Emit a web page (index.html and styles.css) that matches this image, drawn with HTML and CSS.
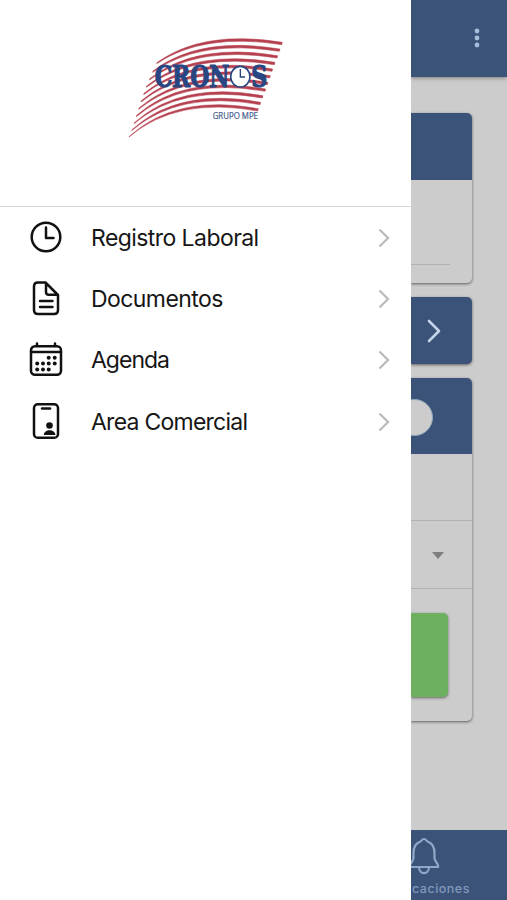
FILE: index.html
```html
<!DOCTYPE html>
<html lang="es">
<head>
<meta charset="utf-8">
<title>Cronos</title>
<link rel="stylesheet" href="styles.css">
</head>
<body>
<div class="app">
  <aside class="menu">
    <header class="brand">
      <svg class="logo" viewBox="0 0 510 345" role="img" aria-label="Cronos">
        <g fill="#b5404f" stroke="#b5404f" stroke-width="1.6">
          <path d="M112 97Q250-2 487 37L485 44Q250 7 110 101Z"/>
          <path d="M99 123Q238 17 480 57L478 64Q238 26 98 127Z"/>
          <path d="M89 146Q228 36 473 77L471 84Q228 45 88 150Z"/>
          <path d="M80 168Q219 56 465 97L463 104Q219 65 79 172Z"/>
          <path d="M72 190Q212 75 458 117L456 124Q212 84 71 194Z"/>
          <path d="M64 212Q205 94 451 137L449 144Q205 103 63 216Z"/>
          <path d="M57 234Q198 113 444 157L442 164Q198 122 56 238Z"/>
          <path d="M50 256Q191 132 437 177L435 184Q191 141 49 260Z"/>
          <path d="M43 278Q184 152 429 197L427 204Q184 161 42 281Z"/>
          <path d="M36 299Q177 171 422 217L420 224Q177 180 35 302Z"/>
          <path d="M28 319Q170 190 415 236L413 243Q170 199 27 321Z"/>
        </g>
        <g class="wordmark">
          <text x="104" y="171" textLength="224" lengthAdjust="spacingAndGlyphs">CRON</text>
          <text x="394" y="171" textLength="48" lengthAdjust="spacingAndGlyphs">S</text>
        </g>
        <ellipse cx="361" cy="140" rx="29" ry="31" fill="#fff" stroke="#274682" stroke-width="5"/>
        <path d="M361 117V141H375" fill="none" stroke="#274682" stroke-width="4"/>
        <text class="group" x="278" y="268" textLength="136" lengthAdjust="spacingAndGlyphs">GRUPO MPE</text>
      </svg>
    </header>
    <nav class="items">
      <a class="item">
        <svg class="icon" viewBox="0 0 36 36"><circle cx="18" cy="18" r="14.300"/><path d="M18 8.500V19H25.500"/></svg>
        <span class="label">Registro Laboral</span>
        <svg class="chevron" viewBox="0 0 12 20"><path d="M1.500 1.500L10 10L1.500 18.500"/></svg>
      </a>
      <a class="item">
        <svg class="icon" viewBox="0 0 36 36"><path d="M10 2.500H17.500L30 15V30Q30 34 26 34H10Q6 34 6 30V6.500Q6 2.500 10 2.500ZM18 3V12Q18 14.800 20.800 14.800H29.500M12 21H24.500M12 27H24.500"/></svg>
        <span class="label">Documentos</span>
        <svg class="chevron" viewBox="0 0 12 20"><path d="M1.500 1.500L10 10L1.500 18.500"/></svg>
      </a>
      <a class="item">
        <svg class="icon" viewBox="0 0 36 36"><rect x="3" y="4.200" width="30" height="28.500" rx="4"/><path d="M9 1.400V4M27 1.400V4M3 10H33"/><g class="solid"><circle cx="20.700" cy="15.700" r="2"/><circle cx="26.700" cy="15.700" r="2"/><circle cx="9.200" cy="21.500" r="2"/><circle cx="15" cy="21.500" r="2"/><circle cx="20.700" cy="21.500" r="2"/><circle cx="26.700" cy="21.500" r="2"/><circle cx="9.200" cy="27.400" r="2"/><circle cx="15" cy="27.400" r="2"/><circle cx="20.700" cy="27.400" r="2"/></g></svg>
        <span class="label agenda">Agenda</span>
        <svg class="chevron" viewBox="0 0 12 20"><path d="M1.500 1.500L10 10L1.500 18.500"/></svg>
      </a>
      <a class="item">
        <svg class="icon" viewBox="0 0 36 36"><rect x="6" y="1.300" width="24" height="33.400" rx="3.800"/><path d="M14 5.500H22"/><g class="solid"><circle cx="21.500" cy="22.500" r="3.300"/><path d="M15.800 32C15.800 25.500 27.400 25.500 27.400 32Z"/></g></svg>
        <span class="label area">Area Comercial</span>
        <svg class="chevron" viewBox="0 0 12 20"><path d="M1.500 1.500L10 10L1.500 18.500"/></svg>
      </a>
    </nav>
  </aside>
  <main class="page">
    <header class="toolbar">
      <svg class="dots" viewBox="0 0 6 20"><circle cx="3" cy="3" r="2.400"/><circle cx="3" cy="10" r="2.400"/><circle cx="3" cy="17" r="2.400"/></svg>
    </header>
    <div class="content">
      <section class="card card-entry">
        <div class="card-title"></div>
        <div class="field"></div>
      </section>
      <section class="card card-link">
        <svg class="forward" viewBox="0 0 14 24"><path d="M2 2L12 12L2 22"/></svg>
      </section>
      <section class="card card-form">
        <div class="switch-row"><span class="knob"></span></div>
        <div class="row"></div>
        <div class="row select"><span class="caret"></span></div>
        <div class="action"><span class="button"></span></div>
      </section>
    </div>
    <footer class="tabbar">
      <svg class="bell" viewBox="0 0 32 38"><path d="M16 2C13.800 2 13.700 4 12 4.700C7 6.500 5.500 11 5.500 16V21C5.500 25 2 25.500 2 29V30H30V29C30 25.500 26.500 25 26.500 21V16C26.500 11 25 6.500 20 4.700C18.300 4 18.200 2 16 2ZM11 30.500C11.500 38 20.500 38 21 30.500"/></svg>
      <span class="tab-label">caciones</span>
    </footer>
  </main>
</div>
</body>
</html>
```
FILE: styles.css
```css
* { box-sizing: border-box; }
body { margin: 0; font-family: Inter, Roboto, sans-serif; overflow: hidden; }
.app { display: flex; width: 507px; height: 900px; overflow: hidden; background: #ccc; }
svg { display: block; flex: none; }

.menu { flex: 0 0 411px; background: #fff; }
.brand { height: 207px; padding: 30px 0 0 120px; border-bottom: 1px solid #d8d8d8; }
.logo { width: 170px; height: 115px; }
.wordmark { font: bold 88px "DejaVu Serif", serif; fill: #274682; stroke: #274682; stroke-width: 3.5; }
.group { font: 27px "Open Sans", sans-serif; fill: #48618e; stroke: #48618e; stroke-width: .7; }

.item { display: flex; align-items: center; height: 61.3px; padding: 0 21px 1px 28px; }
.icon { width: 36px; height: 36px; fill: none; stroke: #111; stroke-width: 2.5; stroke-linecap: round; stroke-linejoin: round; }
.icon .solid { fill: #111; stroke: none; }
.label { flex: 1; margin-left: 27px; padding-top: 1.5px; font-size: 23px; line-height: 30px; letter-spacing: -.57px; color: #161616; white-space: nowrap; }
.agenda { letter-spacing: -1px; }
.area { letter-spacing: -.75px; }
.chevron { width: 12px; height: 20px; margin-top: 1px; fill: none; stroke: #bdbdbd; stroke-width: 2.4; }

.page { display: flex; flex-direction: column; flex: 0 0 96px; overflow: hidden; }
.toolbar { display: flex; justify-content: flex-end; height: 77px; padding: 28px 26.6px 0 0; background: #3b5379; box-shadow: 0 1px 4px rgba(0,0,0,.4); }
.dots { width: 6px; height: 20px; fill: #a7bedb; }
.content { display: flex; flex-direction: column; gap: 14px; flex: 1; padding: 36.3px 35px 0 0; }
.card { background: #ccc; border-radius: 0 5px 5px 0; box-shadow: 0 1px 3px rgba(0,0,0,.55); overflow: hidden; }
.card-entry { height: 170px; }
.card-title { height: 67px; background: #3b5379; }
.field { width: 39px; height: 85px; border-bottom: 1px solid #b1b1b1; }
.card-link { display: flex; align-items: center; height: 67px; padding-left: 16px; background: #3b5379; }
.forward { width: 14px; height: 24px; fill: none; stroke: #c3d4e8; stroke-width: 2.6; stroke-linecap: round; stroke-linejoin: round; }
.card-form { height: 343px; }
.switch-row { display: flex; align-items: center; height: 76px; padding-top: 2px; background: #3b5379; }
.knob { width: 37px; height: 37px; margin-left: -15px; border: 1px solid #93a6b6; border-radius: 50%; background: #ccc; }
.row { height: 67px; border-bottom: 1px solid #b1b1b1; }
.select { height: 68px; padding: 31px 0 0 21px; }
.caret { display: block; width: 12px; border: solid transparent; border-width: 7px 6px 0; border-top-color: #7f7f7f; }
.action { padding: 24px 24px 0 0; }
.button { display: block; height: 84px; border-radius: 0 5px 5px 0; background: #6db060; box-shadow: 0 1px 3px rgba(0,0,0,.5); }

.tabbar { display: flex; flex-direction: column; height: 70.5px; padding-top: 7.5px; background: #3b5379; color: #8198bb; }
.bell { width: 32px; height: 38px; margin-left: -3px; fill: none; stroke: #92a8c9; stroke-width: 2.2; }
.tab-label { margin: 6px 0 0 1px; font-size: 12.500px; line-height: 16px; letter-spacing: .5px; white-space: nowrap; font-weight: 500; }
```
